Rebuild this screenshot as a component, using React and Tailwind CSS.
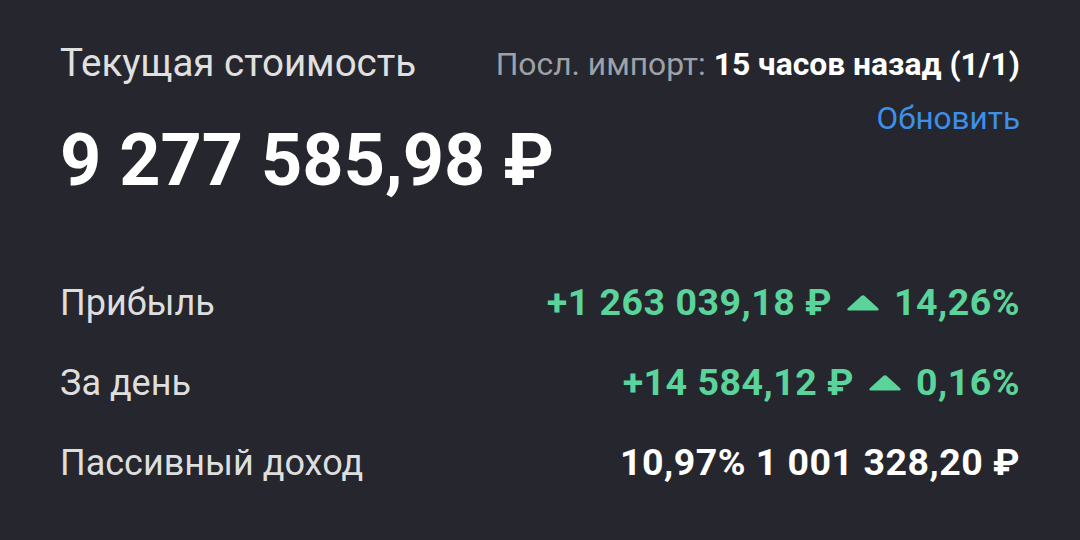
import React from 'react';

function UpTriangle() {
  return (
    <svg width="34" height="17" viewBox="0 0 34 17" className="shrink-0">
      <path
        d="M15 2.2 Q17 0.2 19 2.2 L32.2 14.2 Q33.6 16.4 31.2 16.4 L2.8 16.4 Q0.4 16.4 1.8 14.2 Z"
        fill="#5ad49b"
      />
    </svg>
  );
}

function Row({ label, children }) {
  return (
    <div className="flex justify-between items-center h-[36px] whitespace-nowrap">
      <span className="text-[36px] leading-none text-[#dedede]">{label}</span>
      <div className="flex items-center text-[37.5px] leading-none font-bold tracking-[0.5px]">{children}</div>
    </div>
  );
}

export default function App() {
  return (
    <div
      className="w-[1080px] h-[540px] bg-[#26272e] px-[60px] pt-[44px] overflow-hidden"
      style={{ fontFamily: 'Roboto, "Noto Sans", sans-serif' }}
    >
      <div className="flex justify-between items-start whitespace-nowrap">
        <div className="min-w-0 flex-1">
          <div className="text-[38.5px] leading-none text-[#e0e0e0]">Текущая стоимость</div>
          <div className="mt-[42px] text-[72px] leading-none font-bold text-white">9 277 585,98 ₽</div>
        </div>
        <div className="shrink-0 flex flex-col items-end pt-[5px]">
          <div className="text-[31.8px] leading-none">
            <span className="text-[#9da2a8]">Посл. импорт: </span>
            <span className="font-bold text-white">15 часов назад (1/1)</span>
          </div>
          <div className="mt-[22px] text-[31.5px] leading-none text-[#3d8fe9]">Обновить</div>
        </div>
      </div>

      <div className="mt-[88px] flex flex-col gap-[44px]">
        <Row label="Прибыль">
          <span className="text-[#5ad49b]">+1 263 039,18 ₽</span>
          <span className="mx-[14px]"><UpTriangle /></span>
          <span className="text-[#5ad49b]">14,26%</span>
        </Row>
        <Row label="За день">
          <span className="text-[#5ad49b]">+14 584,12 ₽</span>
          <span className="mx-[14px]"><UpTriangle /></span>
          <span className="text-[#5ad49b]">0,16%</span>
        </Row>
        <Row label="Пассивный доход">
          <span className="text-white">10,97% 1 001 328,20 ₽</span>
        </Row>
      </div>
    </div>
  );
}
